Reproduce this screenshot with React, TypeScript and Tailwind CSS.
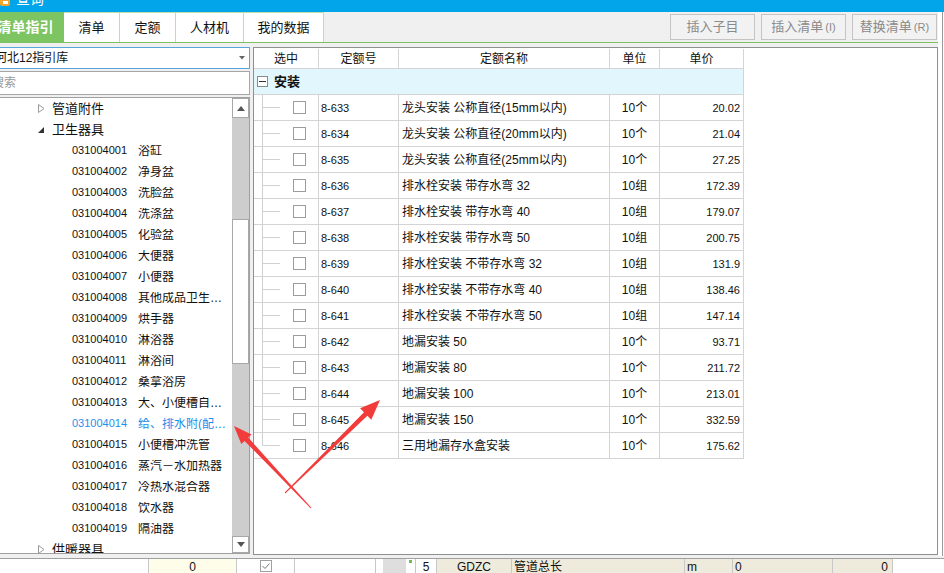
import React from "react"

const TREE = [
  { code: "031004001", name: "浴缸" },
  { code: "031004002", name: "净身盆" },
  { code: "031004003", name: "洗脸盆" },
  { code: "031004004", name: "洗涤盆" },
  { code: "031004005", name: "化验盆" },
  { code: "031004006", name: "大便器" },
  { code: "031004007", name: "小便器" },
  { code: "031004008", name: "其他成品卫生…" },
  { code: "031004009", name: "烘手器" },
  { code: "031004010", name: "淋浴器" },
  { code: "031004011", name: "淋浴间" },
  { code: "031004012", name: "桑拿浴房" },
  { code: "031004013", name: "大、小便槽自…" },
  { code: "031004014", name: "给、排水附(配…", active: true },
  { code: "031004015", name: "小便槽冲洗管" },
  { code: "031004016", name: "蒸汽－水加热器" },
  { code: "031004017", name: "冷热水混合器" },
  { code: "031004018", name: "饮水器" },
  { code: "031004019", name: "隔油器" },
]

const ROWS = [
  ["8-633", "龙头安装 公称直径(15mm以内)", "10个", "20.02"],
  ["8-634", "龙头安装 公称直径(20mm以内)", "10个", "21.04"],
  ["8-635", "龙头安装 公称直径(25mm以内)", "10个", "27.25"],
  ["8-636", "排水栓安装 带存水弯 32", "10组", "172.39"],
  ["8-637", "排水栓安装 带存水弯 40", "10组", "179.07"],
  ["8-638", "排水栓安装 带存水弯 50", "10组", "200.75"],
  ["8-639", "排水栓安装 不带存水弯 32", "10组", "131.9"],
  ["8-640", "排水栓安装 不带存水弯 40", "10组", "138.46"],
  ["8-641", "排水栓安装 不带存水弯 50", "10组", "147.14"],
  ["8-642", "地漏安装 50", "10个", "93.71"],
  ["8-643", "地漏安装 80", "10个", "211.72"],
  ["8-644", "地漏安装 100", "10个", "213.01"],
  ["8-645", "地漏安装 150", "10个", "332.59"],
  ["8-646", "三用地漏存水盒安装", "10个", "175.62"],
]

function Folder({ label, open }: { label: string; open?: boolean }) {
  return (
    <div className="h-[21px] flex items-center pl-[38px] shrink-0">
      <svg width="7" height="9" viewBox="0 0 7 9" className="mr-[7px]">
        {open ? (
          <polygon points="6,2 6,8 0,8" fill="#333" />
        ) : (
          <polygon points="0.5,0.5 6,4.5 0.5,8.5" fill="none" stroke="#9a9a9a" />
        )}
      </svg>
      <span className="text-[13px] leading-none">{label}</span>
    </div>
  )
}

function Btn({ text, key2 }: { text: string; key2?: string }) {
  return (
    <div className="h-[26px] w-[85px] border border-[#c4c4c4] bg-[#f2f2f2] text-[#8a8a8a] text-[13px] flex items-center justify-center">
      {text}
      {key2 && <span className="text-[11px] ml-[2px]">{key2}</span>}
    </div>
  )
}

export default function App() {
  return (
    <div className="relative w-[944px] h-[573px] overflow-hidden bg-[#f0f0f0] text-[12px] text-[#111] font-['Liberation_Sans','Noto_Sans_CJK_SC',sans-serif] flex flex-col">
      {/* 标题栏 */}
      <div className="h-[12px] bg-[#02a5ea] flex items-start overflow-hidden shrink-0">
        <div className="w-[10px] h-[6px] bg-[#f6a52a] rounded-b-[2px] flex items-start justify-center">
          <div className="w-[5px] h-[3px] bg-white mt-[1px]" />
        </div>
        <span className="ml-[6px] -mt-[8px] text-white text-[14px] leading-[14px]">查询</span>
      </div>

      <div className="flex h-[544px] shrink-0">
        <div className="w-[938px] flex flex-col">
          {/* 页签 */}
          <div className="h-[31px] flex border-b border-[#7cc35f] shrink-0">
            <div className="-ml-[13px] w-[77px] bg-[#7dc462] text-white font-bold text-[14px] flex items-center justify-center">清单指引</div>
            <div className="w-[56px] bg-white border-t border-r border-[#b9e1a9] text-[13px] flex items-center justify-center">清单</div>
            <div className="w-[56px] bg-white border-t border-r border-[#b9e1a9] text-[13px] flex items-center justify-center">定额</div>
            <div className="w-[68px] bg-white border-t border-r border-[#b9e1a9] text-[13px] flex items-center justify-center">人材机</div>
            <div className="w-[80px] bg-white border-t border-r border-[#b9e1a9] text-[13px] flex items-center justify-center">我的数据</div>
            <div className="ml-auto flex items-start gap-[6px] pt-[2px] pr-[1px]">
              <Btn text="插入子目" />
              <Btn text="插入清单" key2="(I)" />
              <Btn text="替换清单" key2="(R)" />
            </div>
          </div>

          {/* 主体 */}
          <div className="h-[513px] flex">
            {/* 左侧指引 */}
            <div className="w-[250px] flex flex-col gap-[2px] pt-[4px] pb-[2px]">
              <div className="h-[22px] border border-l-0 border-[#58a7da] bg-white flex items-center overflow-hidden">
                <span className="-ml-[5px] leading-none text-[12px]">河北12指引库</span>
                <svg width="6" height="4" viewBox="0 0 6 4" className="ml-auto mr-[4px]">
                  <polygon points="0,0 6,0 3,3.5" fill="#666" />
                </svg>
              </div>
              <div className="h-[24px] border border-l-0 border-[#a6a6a6] bg-white flex items-center overflow-hidden">
                <span className="-ml-[8px] leading-none text-[#999] text-[12px]">搜索</span>
              </div>
              <div className="flex-1 border border-l-0 border-[#a0a0a0] bg-white flex overflow-hidden">
                <div className="flex-1 flex flex-col overflow-hidden">
                  <Folder label="管道附件" />
                  <Folder label="卫生器具" open />
                  {TREE.map((t) => (
                    <div key={t.code} className={`h-[21px] flex items-center pl-[72px] shrink-0 whitespace-nowrap ${t.active ? "text-[#1f8eec]" : "text-[#111]"}`}>
                      <span className="w-[66px] text-[11px] leading-none">{t.code}</span>
                      <span className="w-[88px] overflow-hidden text-[12px] leading-none">{t.name}</span>
                    </div>
                  ))}
                  <Folder label="供暖器具" />
                </div>
                {/* 滚动条 */}
                <div className="w-[17px] flex flex-col bg-[#cdcdcd]">
                  <div className="h-[20px] bg-white border border-[#a8a8a8] flex items-center justify-center">
                    <svg width="8" height="5" viewBox="0 0 8 5"><polygon points="0,5 8,5 4,0" fill="#555" /></svg>
                  </div>
                  <div className="h-[101px]" />
                  <div className="h-[145px] bg-white border border-[#a8a8a8]" />
                  <div className="flex-1" />
                  <div className="h-[17px] bg-white border border-[#a8a8a8] flex items-center justify-center">
                    <svg width="8" height="5" viewBox="0 0 8 5"><polygon points="0,0 8,0 4,5" fill="#555" /></svg>
                  </div>
                </div>
              </div>
            </div>

            {/* 右侧定额表 */}
            <div className="flex-1 ml-[3px] mt-[4px] mb-[1px] border border-[#8d8f91] bg-white overflow-hidden">
              <div className="w-[490px] h-[21px] flex border-b border-[#d4d4d4] pt-[1px]">
                <div className="w-[65px] border-r border-[#d4d4d4] flex items-center justify-center">选中</div>
                <div className="w-[80px] border-r border-[#d4d4d4] flex items-center justify-center">定额号</div>
                <div className="w-[211px] border-r border-[#d4d4d4] flex items-center justify-center">定额名称</div>
                <div className="w-[50px] border-r border-[#d4d4d4] flex items-center justify-center">单位</div>
                <div className="w-[84px] border-r border-[#d4d4d4] flex items-center justify-center">单价</div>
              </div>
              <div className="w-[490px] h-[26px] flex items-center bg-[#e1f6fd] border-b border-r border-[#d4d4d4] pl-[3px]">
                <div className="w-[11px] h-[11px] border border-[#8a8a8a] bg-white flex items-center justify-center">
                  <div className="w-[7px] h-[1px] bg-[#333]" />
                </div>
                <span className="ml-[6px] font-bold text-[13px] leading-none">安装</span>
              </div>
              {ROWS.map((r, i) => (
                <div key={r[0]} className="w-[490px] h-[26px] flex border-b border-[#d4d4d4]">
                  <div className="w-[65px] border-r border-[#d4d4d4] flex items-center">
                    <svg width="27" height="25" viewBox="0 0 27 25">
                      <line x1="8.5" y1="0" x2="8.5" y2={i === ROWS.length - 1 ? 12.5 : 25} stroke="#d0d0d0" />
                      <line x1="8.5" y1="12.5" x2="26" y2="12.5" stroke="#d0d0d0" />
                    </svg>
                    <div className="ml-[12px] w-[13px] h-[13px] border border-[#9c9c9c] bg-white" />
                  </div>
                  <div className="w-[80px] border-r border-[#d4d4d4] flex items-center pl-[2px] pt-[1px] text-[11px]">{r[0]}</div>
                  <div className="w-[211px] border-r border-[#d4d4d4] flex items-center pl-[3px] pt-[1px] whitespace-nowrap">{r[1]}</div>
                  <div className="w-[50px] border-r border-[#d4d4d4] flex items-center justify-center pt-[1px]">{r[2]}</div>
                  <div className="w-[84px] border-r border-[#d4d4d4] flex items-center justify-end pr-[3px] pt-[1px] text-[11px]">{r[3]}</div>
                </div>
              ))}
            </div>
          </div>
        </div>

        {/* 右侧窗口边 */}
        <div className="w-[6px] flex">
          <div className="w-[4px] bg-white" />
          <div className="w-[1px] bg-[#9a9a9a]" />
          <div className="w-[1px] bg-white" />
        </div>
      </div>

      {/* 底部表格 */}
      <div className="mt-[2px] h-[15px] border-t border-[#a0a0a0] bg-white flex text-[12px] overflow-hidden">
        <div className="w-[148px]" />
        <div className="w-[89px] bg-[#fdfde9] border-l border-r border-[#c8c8c8] flex justify-center pt-[2px] leading-none">0</div>
        <div className="w-[58px] border-r border-[#c8c8c8] flex justify-center pt-[1px]">
          <div className="w-[12px] h-[12px] border border-[#a0a0a0] flex items-center justify-center">
            <svg width="8" height="6" viewBox="0 0 8 6"><polyline points="0.5,3 3,5.5 7.5,0.5" fill="none" stroke="#777" /></svg>
          </div>
        </div>
        <div className="w-[81px] border-r border-[#c8c8c8]" />
        <div className="w-[7px]" />
        <div className="w-[23px] bg-[#dedede]" />
        <div className="w-[9px] flex justify-center"><div className="w-[3px] h-[3px] bg-[#6cbf4f] mt-[1px]" /></div>
        <div className="w-[22px] border-l border-r border-[#c8c8c8] flex justify-center pt-[2px] leading-none">5</div>
        <div className="w-[75px] bg-[#eeebdc] border-r border-[#c8c8c8] flex justify-center pt-[2px] leading-none">GDZC</div>
        <div className="w-[173px] bg-[#eeebdc] border-r border-[#c8c8c8] pl-[2px] pt-[2px] leading-none">管道总长</div>
        <div className="w-[48px] bg-[#eeebdc] border-r border-[#c8c8c8] pl-[2px] pt-[2px] leading-none">m</div>
        <div className="w-[100px] bg-[#eeebdc] border-r border-[#c8c8c8] pl-[2px] pt-[2px] leading-none">0</div>
        <div className="w-[60px] bg-[#eeebdc] border-r border-[#c8c8c8] flex justify-end pr-[4px] pt-[2px] leading-none">0</div>
      </div>

      {/* 红色标注箭头 */}
      <svg className="absolute inset-0 pointer-events-none" width="944" height="573" viewBox="0 0 944 573">
        <polygon points="311.4,507.7 248.2,437.5 251.5,434.4 234,426 241.3,444 244.6,440.9 310.6,508.3" fill="#f23c3c" />
        <polygon points="285.3,493.4 367.4,415.8 371.3,419.7 380,400 360.1,408.3 364,412.2 284.7,492.6" fill="#f23c3c" />
      </svg>
    </div>
  )
}
